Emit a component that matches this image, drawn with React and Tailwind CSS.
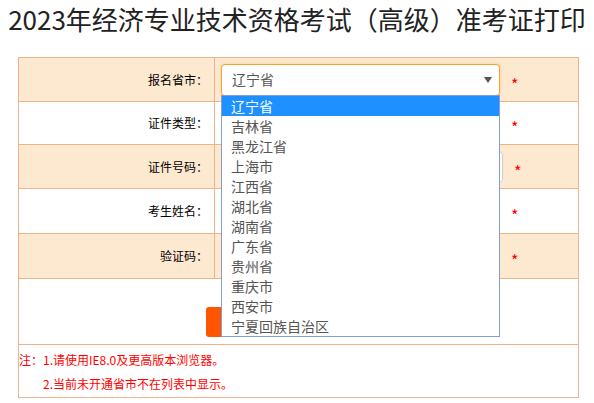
import React from 'react';

const provinces = ['辽宁省', '吉林省', '黑龙江省', '上海市', '江西省', '湖北省', '湖南省', '广东省', '贵州省', '重庆市', '西安市', '宁夏回族自治区'];

const Star = ({ className = '' }) => (
  <span className={`ml-[11px] text-[16px] leading-none text-[#f00] mt-[8px] ${className}`}>*</span>
);

const Label = ({ children }) => (
  <div className="w-[196px] h-full border-r border-[#efb38a] flex items-center justify-end pr-[6px] text-[12px] text-black">
    {children}
  </div>
);

export default function App() {
  return (
    <div className="w-[594px] h-[403px] bg-white overflow-hidden font-['Noto_Sans_CJK_SC',sans-serif]">
      <h1 className="h-[57px] text-center text-[26px] font-normal leading-[38px] text-[#222] whitespace-nowrap">
        2023年经济专业技术资格考试（高级）准考证打印
      </h1>

      <div className="ml-[18px] w-[561px] border border-[#efb38a]">
        {/* 报名省市 */}
        <div className="h-[44px] flex border-b border-[#efb38a] bg-[#fde9d0]">
          <Label>报名省市：</Label>
          <div className="flex items-center pl-[6px]">
            <div className="relative">
              <div className="w-[279px] h-[32px] rounded-[4px] border border-[#f7a234] bg-white shadow-[0_0_3px_rgba(247,162,52,0.5)] flex items-center justify-between pl-[10px] pr-[7px] text-[14px] text-[#555]">
                <span>辽宁省</span>
                <svg width="8" height="6" viewBox="0 0 8 6"><path d="M0 0h8L4 6z" fill="#555" /></svg>
              </div>
              <ul className="absolute left-0 top-[31px] z-10 w-[279px] h-[242px] border border-[#7f9fd6] bg-white">
                {provinces.map((p, i) => (
                  <li
                    key={p}
                    className={`h-[20px] leading-[20px] pl-[9px] text-[14px] ${i === 0 ? 'bg-[#1e90ff] text-white' : 'text-[#555]'}`}
                  >
                    {p}
                  </li>
                ))}
              </ul>
            </div>
            <Star />
          </div>
        </div>

        {/* 证件类型 */}
        <div className="h-[43px] flex border-b border-[#efb38a] bg-white">
          <Label>证件类型：</Label>
          <div className="flex items-center pl-[6px]">
            <div className="w-[279px] h-[32px] rounded-[4px] border border-[#ccc] bg-white" />
            <Star />
          </div>
        </div>

        {/* 证件号码 */}
        <div className="h-[44px] flex border-b border-[#efb38a] bg-[#fde9d0]">
          <Label>证件号码：</Label>
          <div className="flex items-center pl-[6px]">
            <div className="w-[282px] h-[32px] rounded-[4px] border border-[#ccc] bg-white" />
            <Star className="ml-[10px]" />
          </div>
        </div>

        {/* 考生姓名 */}
        <div className="h-[45px] flex border-b border-[#efb38a] bg-white">
          <Label>考生姓名：</Label>
          <div className="flex items-center pl-[6px]">
            <div className="w-[279px] h-[32px] rounded-[4px] border border-[#ccc] bg-white" />
            <Star />
          </div>
        </div>

        {/* 验证码 */}
        <div className="h-[45px] flex border-b border-[#efb38a] bg-[#fde9d0]">
          <Label>验证码：</Label>
          <div className="flex items-center pl-[6px]">
            <div className="w-[279px] h-[32px] rounded-[4px] border border-[#ccc] bg-white" />
            <Star />
          </div>
        </div>

        {/* 按钮 */}
        <div className="h-[66px] flex justify-center pt-[28px] border-b border-[#efb38a] bg-white">
          <button className="w-[186px] h-[30px] rounded-[3px] bg-[#ff5500]" />
        </div>

        {/* 注 */}
        <div className="h-[52px] pt-[3px] text-[12px] leading-[24px] text-[#f00] bg-white">
          <p>注：1.请使用IE8.0及更高版本浏览器。</p>
          <p className="pl-[24px]">2.当前未开通省市不在列表中显示。</p>
        </div>
      </div>
    </div>
  );
}
